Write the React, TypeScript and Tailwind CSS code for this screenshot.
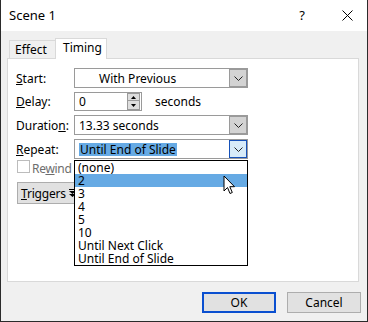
import React from "react";

const Chevron = () => (
  <svg width="9" height="5" viewBox="0 0 9 5">
    <path d="M0.5 0.5 L4.5 4.5 L8.5 0.5" fill="none" stroke="#222" strokeWidth="1" />
  </svg>
);

const DropBtn = ({ active }: { active?: boolean }) => (
  <div
    className={
      active
        ? "w-[18px] h-[18px] border border-[#1651b8] bg-[#d7ebf9] flex items-center justify-center"
        : "w-[18px] h-[18px] border border-[#9a9a9a] bg-[#d3d3d3] flex items-center justify-center"
    }
  >
    <Chevron />
  </div>
);

const Row = ({ label, children }: { label: React.ReactNode; children: React.ReactNode }) => (
  <div className="flex items-center h-[20px]">
    <div className="w-[58px] text-black">{label}</div>
    {children}
  </div>
);

const Cursor = () => (
  <svg width="13" height="20" viewBox="0 0 13 20" className="absolute left-[222px] top-[175px] z-30">
    <path
      d="M1 1 L1 16 L4.5 12.5 L7 18.5 L9.3 17.5 L6.8 11.7 L11.5 11.7 Z"
      fill="#fff"
      stroke="#000"
      strokeWidth="1"
      strokeLinejoin="round"
    />
  </svg>
);

const items = ["(none)", "2", "3", "4", "5", "10", "Until Next Click", "Until End of Slide"];

export default function App() {
  return (
    <div className="relative w-[368px] h-[322px] bg-[#f0f0f0] border-l border-r border-b border-[#2b2b2b] font-['Noto_Sans',sans-serif] text-[12px] leading-[13px] text-black flex flex-col">
      {/* title bar */}
      <div className="h-[31px] bg-white flex items-center pl-[8px] pr-[14px] shrink-0">
        <span className="text-[13px]">Scene 1</span>
        <span className="ml-auto text-[13px] mr-[37px]">?</span>
        <svg width="11" height="11" viewBox="0 0 11 11">
          <path d="M0.5 0.5 L10.5 10.5 M10.5 0.5 L0.5 10.5" stroke="#000" strokeWidth="1" />
        </svg>
      </div>

      {/* tabs */}
      <div className="mt-[7px] ml-[8px] h-[20px] flex items-end">
        <div className="w-[46px] h-[18px] border-l border-t border-[#d9d9d9] pl-[5px] pt-[2px]">Effect</div>
        <div className="relative z-10 w-[52px] h-[21px] -mb-px bg-white border-l border-t border-r border-[#d9d9d9] pl-[7px] pt-[2px]">
          Timing
        </div>
      </div>

      {/* panel */}
      <div className="ml-[6px] w-[352px] h-[224px] bg-white border border-[#d9d9d9] pl-[8px] pt-[9px] flex flex-col gap-[4px]">
        <Row label={<><u>S</u>tart:</>}>
          <div className="w-[174px] h-[20px] border border-[#9a9a9a] flex items-center justify-between">
            <span className="pl-[24px]">With Previous</span>
            <DropBtn />
          </div>
        </Row>
        <div className="flex items-center h-[19px]">
          <div className="w-[58px]">
            <u>D</u>elay:
          </div>
          <div className="w-[68px] h-[19px] border border-[#9a9a9a] flex items-center justify-between pr-px">
            <span className="pl-[4px]">0</span>
            <div className="w-[13px] h-[17px] flex flex-col">
              <div className="h-[8px] border border-[#9a9a9a] bg-[#dedede] flex items-center justify-center">
                <svg width="5" height="3" viewBox="0 0 5 3">
                  <path d="M0 3 L2.5 0 L5 3 Z" fill="#000" />
                </svg>
              </div>
              <div className="h-[9px] border border-t-0 border-[#9a9a9a] bg-[#dedede] flex items-center justify-center">
                <svg width="5" height="3" viewBox="0 0 5 3">
                  <path d="M0 0 L5 0 L2.5 3 Z" fill="#000" />
                </svg>
              </div>
            </div>
          </div>
          <span className="ml-[13px]">seconds</span>
        </div>
        <Row label={<>Duratio<u>n</u>:</>}>
          <div className="w-[174px] h-[20px] border border-[#9a9a9a] flex items-center justify-between">
            <span className="pl-[4px]">13.33 seconds</span>
            <DropBtn />
          </div>
        </Row>
        <Row label={<><u>R</u>epeat:</>}>
          <div className="w-[174px] h-[20px] border border-[#9a9a9a] flex items-center justify-between">
            <span className="ml-[4px] bg-[#66aae4] px-px h-[13px] leading-[13px]">Until End of Slide</span>
            <DropBtn active />
          </div>
        </Row>

        <div className="flex items-center h-[14px] -mt-[4px] ml-[1px]">
          <div className="w-[13px] h-[13px] border border-[#bcbcbc] bg-white" />
          <span className="ml-[2px] text-[#6d6d6d] pt-[5px] tracking-[-0.3px]">
            Re<u>w</u>ind
          </span>
        </div>

        <div className="mt-[5px] ml-[1px] w-[90px] h-[22px] bg-[#e1e1e1] border border-[#adadad] flex items-center pl-[3px]">
          <span className="tracking-[-0.2px]">
            <u>T</u>riggers
          </span>
          <svg width="7" height="8" viewBox="0 0 7 8" className="ml-[3px]">
            <path d="M0 0 L7 0 L7 1 L0 1 Z M0 2 L7 2 L3.5 5 Z M0 5 L7 5 L3.5 8 Z" fill="#000" />
          </svg>
        </div>
      </div>

      {/* buttons */}
      <div className="mt-[10px] flex justify-end gap-[11px] pr-[6px]">
        <div className="w-[74px] h-[21px] bg-[#e1e1e1] border-2 border-[#0a4fd0] flex items-center justify-center">OK</div>
        <div className="w-[74px] h-[21px] bg-[#e1e1e1] border border-[#adadad] flex items-center justify-center">Cancel</div>
      </div>

      {/* dropdown list */}
      <div className="absolute left-[73px] top-[160px] w-[174px] border border-black bg-white z-20 flex flex-col">
        {items.map((it) => (
          <div key={it} className={it === "2" ? "h-[13px] pl-[3px] bg-[#66aae4] leading-[13px]" : "h-[13px] pl-[3px] leading-[13px]"}>
            {it}
          </div>
        ))}
      </div>

      <Cursor />
    </div>
  );
}
